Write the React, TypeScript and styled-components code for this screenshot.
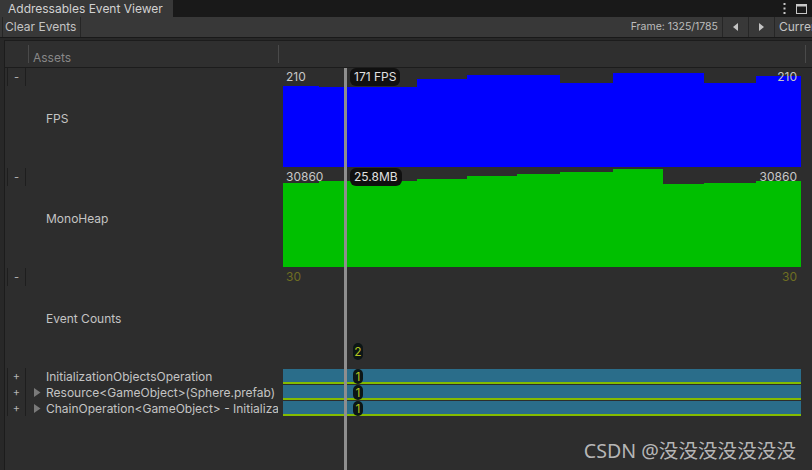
import React from "react";
import styled, { createGlobalStyle } from "styled-components";

type Segment = { w: number; h: number };

type GraphRowData = {
  name: string;
  color?: string;
  segments: Segment[];
  scale: string;
  scaleColor: string;
  cursor: string;
  cursorKind: "value" | "count";
};

type EventRowData = {
  name: string;
  expandable: boolean;
};

const GlobalStyle = createGlobalStyle`
  html, body {
    margin: 0;
    padding: 0;
    background: #282828;
  }
  body {
    font-family: Inter, "Noto Sans", sans-serif;
    font-size: 12px;
  }
`;

const Window = styled.div`
  position: relative;
  width: 812px;
  height: 470px;
  overflow: hidden;
  background: #282828;
  color: #c4c4c4;
  display: flex;
  flex-direction: column;
`;

const TabBar = styled.div`
  height: 17px;
  flex-shrink: 0;
  background: #191919;
  display: flex;
  align-items: stretch;
`;

const Tab = styled.div`
  width: 165px;
  padding-left: 8px;
  background: #383838;
  color: #d2d2d2;
  line-height: 17px;
  white-space: nowrap;
`;

const TabActions = styled.div`
  margin-left: auto;
  display: flex;
  align-items: center;
  gap: 10px;
  padding-right: 5px;
`;

const Toolbar = styled.div`
  height: 20px;
  flex-shrink: 0;
  background: #383838;
  border-bottom: 1px solid #191919;
  display: flex;
  align-items: stretch;
  padding-left: 2px;
  white-space: nowrap;
  overflow: hidden;
`;

const ToolButton = styled.div`
  padding: 0 4px 0 2px;
  border-left: 1px solid #262626;
  border-right: 1px solid #262626;
  line-height: 20px;
  color: #c4c4c4;
`;

const FrameLabel = styled.div`
  margin-left: auto;
  padding-right: 4px;
  font-size: 10.5px;
  line-height: 20px;
  color: #bdbdbd;
`;

const NavButton = styled.div`
  width: 25px;
  border-left: 1px solid #262626;
  display: flex;
  align-items: center;
  justify-content: center;
  flex-shrink: 0;
`;

const ToolText = styled.div`
  width: 33px;
  flex-shrink: 0;
  overflow: hidden;
  border-left: 1px solid #262626;
  padding-left: 4px;
  line-height: 20px;
  color: #c4c4c4;
`;

const Panel = styled.div`
  position: relative;
  flex: 1;
  margin-top: 2px;
  margin-left: 4px;
  border-left: 1px solid #1c1c1c;
  border-top: 1px solid #1c1c1c;
  background: #2d2d2d;
  display: flex;
  flex-direction: column;
`;

const Header = styled.div`
  height: 26px;
  flex-shrink: 0;
  background: #2f2f2f;
  border-bottom: 1px solid #1c1c1c;
  display: flex;
  align-items: center;
`;

const HeaderCell = styled.div<{ $width: number }>`
  width: ${(p) => p.$width}px;
  height: 100%;
  display: flex;
  align-items: flex-end;
  padding-left: 4px;
  padding-bottom: 2px;
  box-sizing: border-box;
  color: #888888;
  line-height: 14px;
`;

const HeaderSep = styled.div`
  width: 1px;
  height: 18px;
  background: #4a4a4a;
  flex-shrink: 0;
`;

const GraphRowBox = styled.div`
  height: 100px;
  display: flex;
  flex-shrink: 0;
`;

const EventRowBox = styled.div`
  height: 16px;
  display: flex;
  flex-shrink: 0;
`;

const LeftCell = styled.div`
  width: 278px;
  display: flex;
  align-items: flex-start;
  flex-shrink: 0;
`;

const Toggle = styled.div<{ $height: number }>`
  margin-left: 2px;
  width: 17px;
  height: ${(p) => p.$height}px;
  border-left: 1px solid #1e1e1e;
  border-right: 1px solid #1e1e1e;
  color: #b4b4b4;
  font-size: 11px;
  line-height: ${(p) => p.$height}px;
  text-align: center;
  flex-shrink: 0;
`;

const RowLabel = styled.div`
  width: 252px;
  height: 100%;
  display: flex;
  align-items: center;
  overflow: hidden;
  white-space: nowrap;
  color: #c4c4c4;
`;

const GraphName = styled.span`
  padding-left: 20px;
`;

const Expander = styled.span<{ $visible: boolean }>`
  width: 7px;
  margin-left: 8px;
  margin-right: 5px;
  display: flex;
  visibility: ${(p) => (p.$visible ? "visible" : "hidden")};
  flex-shrink: 0;
`;

const ChartCell = styled.div`
  position: relative;
  width: 518px;
  height: 99px;
  flex-shrink: 0;
`;

const Bars = styled.div`
  height: 100%;
  display: flex;
  align-items: flex-end;
`;

const Bar = styled.div<{ $color: string }>`
  background: ${(p) => p.$color};
  flex-shrink: 0;
`;

const ScaleLabel = styled.div<{ $color: string; $side: "left" | "right" }>`
  position: absolute;
  top: 2px;
  ${(p) => (p.$side === "left" ? "left: 3px;" : "right: 4px;")}
  color: ${(p) => p.$color};
  line-height: 14px;
`;

const ValuePill = styled.div`
  position: absolute;
  left: 67px;
  top: 0;
  height: 18px;
  padding: 0 4px;
  border-radius: 6px;
  background: #101010;
  color: #e0e0e0;
  line-height: 18px;
  white-space: nowrap;
`;

const CountPill = styled.div<{ $top: number; $height: number }>`
  position: absolute;
  left: 70px;
  top: ${(p) => p.$top}px;
  width: 10px;
  height: ${(p) => p.$height}px;
  border-radius: 5px;
  background: #0c1616;
  color: #b3c21e;
  line-height: ${(p) => p.$height}px;
  text-align: center;
`;

const EventTrack = styled.div`
  position: relative;
  width: 518px;
  flex-shrink: 0;
  padding-top: 1px;
`;

const EventBar = styled.div`
  height: 13px;
  background: #2a6d8a;
  border-bottom: 2px solid #84bb00;
`;

const Cursor = styled.div`
  position: absolute;
  left: 339px;
  top: 27px;
  bottom: 0;
  width: 3px;
  background: #8e8e8e;
`;

const Watermark = styled.div`
  position: absolute;
  right: 16px;
  bottom: 8px;
  font-family: "Noto Sans", "Noto Sans CJK SC", sans-serif;
  font-size: 19.6px;
  line-height: 22px;
  color: rgba(220, 220, 220, 0.8);
  white-space: nowrap;
`;

const graphRows: GraphRowData[] = [
  {
    name: "FPS",
    color: "#0000ff",
    segments: [
      { w: 36, h: 81 },
      { w: 98, h: 80 },
      { w: 50, h: 88 },
      { w: 93, h: 92 },
      { w: 53, h: 84 },
      { w: 91, h: 94 },
      { w: 52, h: 84 },
      { w: 45, h: 91 },
    ],
    scale: "210",
    scaleColor: "#c8c8c8",
    cursor: "171 FPS",
    cursorKind: "value",
  },
  {
    name: "MonoHeap",
    color: "#00bf00",
    segments: [
      { w: 36, h: 84 },
      { w: 98, h: 86 },
      { w: 50, h: 88 },
      { w: 50, h: 91 },
      { w: 43, h: 93 },
      { w: 53, h: 95 },
      { w: 50, h: 98 },
      { w: 41, h: 83 },
      { w: 52, h: 84 },
      { w: 45, h: 86 },
    ],
    scale: "30860",
    scaleColor: "#c8c8c8",
    cursor: "25.8MB",
    cursorKind: "value",
  },
  {
    name: "Event Counts",
    segments: [],
    scale: "30",
    scaleColor: "#6e6e22",
    cursor: "2",
    cursorKind: "count",
  },
];

const eventRows: EventRowData[] = [
  { name: "InitializationObjectsOperation", expandable: false },
  { name: "Resource<GameObject>(Sphere.prefab)", expandable: true },
  { name: "ChainOperation<GameObject> - InitializationObjectsOperation", expandable: true },
];

function Kebab() {
  return (
    <svg width="3" height="11" viewBox="0 0 3 11">
      <rect x="0.5" y="0" width="2" height="2" fill="#c8c8c8" />
      <rect x="0.5" y="4.5" width="2" height="2" fill="#c8c8c8" />
      <rect x="0.5" y="9" width="2" height="2" fill="#c8c8c8" />
    </svg>
  );
}

function MaximizeIcon() {
  return (
    <svg width="11" height="10" viewBox="0 0 11 10">
      <rect x="0.5" y="0.5" width="10" height="9" fill="none" stroke="#c8c8c8" />
      <rect x="0.5" y="0.5" width="10" height="2" fill="#c8c8c8" />
    </svg>
  );
}

function Arrow({ dir }: { dir: "left" | "right" }) {
  const points = dir === "left" ? "5,0 5,8 0,4" : "0,0 0,8 5,4";
  return (
    <svg width="5" height="8" viewBox="0 0 5 8">
      <polygon points={points} fill="#c4c4c4" />
    </svg>
  );
}

function GraphRow({ row }: { row: GraphRowData }) {
  return (
    <GraphRowBox>
      <LeftCell>
        <Toggle $height={18}>-</Toggle>
        <RowLabel>
          <GraphName>{row.name}</GraphName>
        </RowLabel>
      </LeftCell>
      <ChartCell>
        <Bars>
          {row.segments.map((s, i) => (
            <Bar key={i} $color={row.color ?? "transparent"} style={{ width: s.w, height: s.h }} />
          ))}
        </Bars>
        <ScaleLabel $side="left" $color={row.scaleColor}>
          {row.scale}
        </ScaleLabel>
        <ScaleLabel $side="right" $color={row.scaleColor}>
          {row.scale}
        </ScaleLabel>
        {row.cursorKind === "value" ? (
          <ValuePill>{row.cursor}</ValuePill>
        ) : (
          <CountPill $top={75} $height={17}>
            {row.cursor}
          </CountPill>
        )}
      </ChartCell>
    </GraphRowBox>
  );
}

function EventRow({ row }: { row: EventRowData }) {
  return (
    <EventRowBox>
      <LeftCell>
        <Toggle $height={16}>+</Toggle>
        <RowLabel>
          <Expander $visible={row.expandable}>
            <svg width="7" height="9" viewBox="0 0 7 9">
              <polygon points="0,0 0,9 6.5,4.5" fill="#7a7a7a" />
            </svg>
          </Expander>
          {row.name}
        </RowLabel>
      </LeftCell>
      <EventTrack>
        <EventBar />
        <CountPill $top={1} $height={15}>
          1
        </CountPill>
      </EventTrack>
    </EventRowBox>
  );
}

export default function App() {
  return (
    <>
      <GlobalStyle />
      <Window>
        <TabBar>
          <Tab>Addressables Event Viewer</Tab>
          <TabActions>
            <Kebab />
            <MaximizeIcon />
          </TabActions>
        </TabBar>
        <Toolbar>
          <ToolButton>Clear Events</ToolButton>
          <FrameLabel>Frame: 1325/1785</FrameLabel>
          <NavButton>
            <Arrow dir="left" />
          </NavButton>
          <NavButton>
            <Arrow dir="right" />
          </NavButton>
          <ToolText>Current</ToolText>
        </Toolbar>
        <Panel>
          <Header>
            <HeaderCell $width={23} />
            <HeaderSep />
            <HeaderCell $width={249}>Assets</HeaderCell>
            <HeaderSep />
            <HeaderCell $width={526} />
            <HeaderSep />
          </Header>
          {graphRows.map((row) => (
            <GraphRow key={row.name} row={row} />
          ))}
          {eventRows.map((row) => (
            <EventRow key={row.name} row={row} />
          ))}
          <Cursor />
        </Panel>
        <Watermark>CSDN @没没没没没没没</Watermark>
      </Window>
    </>
  );
}
